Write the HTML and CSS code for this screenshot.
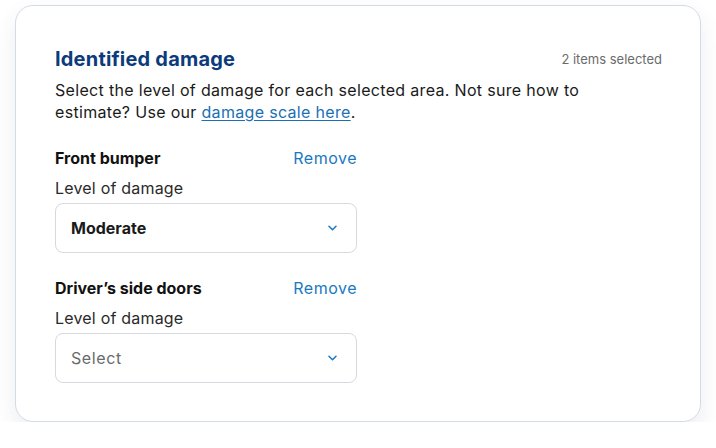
FILE: index.html
```html
<!DOCTYPE html>
<html>
<head>
<meta charset="utf-8">
<link rel="stylesheet" href="styles.css">
</head>
<body>
<div class="card">
  <div class="head">
    <h1 class="title">Identified damage</h1>
    <span class="count">2 items selected</span>
  </div>
  <p class="intro">Select the level of damage for each selected area. Not sure how to estimate? Use our <a class="link" href="#">damage scale here</a>.</p>

  <div class="item">
    <div class="item-head">
      <span class="item-name">Front bumper</span>
      <a class="remove" href="#">Remove</a>
    </div>
    <div class="label">Level of damage</div>
    <div class="select">
      <span class="value">Moderate</span>
      <svg class="chev" width="9" height="6" viewBox="0 0 9 6"><path d="M1 1.2l3.5 3.5 3.5-3.5" fill="none" stroke="#1a78c2" stroke-width="1.5" stroke-linecap="round" stroke-linejoin="round"/></svg>
    </div>
  </div>

  <div class="item second">
    <div class="item-head">
      <span class="item-name">Driver’s side doors</span>
      <a class="remove" href="#">Remove</a>
    </div>
    <div class="label">Level of damage</div>
    <div class="select">
      <span class="placeholder">Select</span>
      <svg class="chev" width="9" height="6" viewBox="0 0 9 6"><path d="M1 1.2l3.5 3.5 3.5-3.5" fill="none" stroke="#1a78c2" stroke-width="1.5" stroke-linecap="round" stroke-linejoin="round"/></svg>
    </div>
  </div>
</div>
</body>
</html>
```

FILE: styles.css
```css
* { box-sizing: border-box; }
html, body { margin: 0; padding: 0; background: #ffffff; }
body {
  font-family: Inter, "Noto Sans", sans-serif;
  color: #1a1a1a;
  padding: 5px 15px 0 15px;
}
.card {
  width: 686px;
  height: 417px;
  border: 1px solid #d3dbe7;
  border-radius: 18px;
  background: #fff;
  padding: 40px 38px 38px 39px;
  box-shadow: 0 10px 22px rgba(40, 60, 110, 0.09);
}
.head {
  display: flex;
  justify-content: space-between;
  align-items: center;
  height: 26px;
}
.title {
  margin: 0;
  font-size: 20px;
  font-weight: 700;
  color: #0b3b7b;
  letter-spacing: 0.2px;
}
.count {
  font-size: 13px;
  color: #6b6b6b;
}
.intro {
  margin: 7px 0 0 0;
  font-size: 16px;
  line-height: 22px;
  letter-spacing: 0.32px;
  color: #1a1a1a;
  max-width: 580px;
}
.link {
  color: #1a6fb5;
  text-decoration: underline;
  text-underline-offset: 2px;
}
.item {
  width: 302px;
  margin-top: 25px;
}
.item.second { margin-top: 25px; }
.item-head {
  display: flex;
  justify-content: space-between;
  align-items: center;
  height: 20px;
}
.item-name {
  font-size: 16px;
  font-weight: 700;
  color: #111;
}
.remove {
  font-size: 16px;
  letter-spacing: 0.5px;
  color: #1a78c2;
  text-decoration: none;
}
.label {
  margin-top: 10px;
  font-size: 16px;
  line-height: 20px;
  letter-spacing: 0.2px;
  color: #2a2a2a;
}
.select {
  margin-top: 5px;
  height: 50px;
  border: 1px solid #d6dae0;
  border-radius: 8px;
  display: flex;
  align-items: center;
  justify-content: space-between;
  padding: 0 19px 0 15px;
}
.value {
  font-size: 16px;
  font-weight: 700;
  color: #1a1a1a;
}
.placeholder {
  font-size: 16px;
  letter-spacing: 0.6px;
  color: #6a6a6a;
}
.chev { display: block; }
```
